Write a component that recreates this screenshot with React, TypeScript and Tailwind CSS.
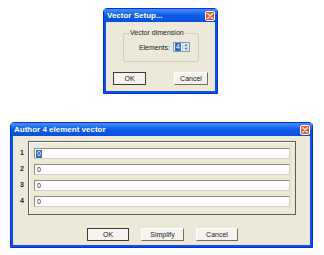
import React from "react";

function CloseBox() {
  return (
    <div className="flex h-[10px] w-[10px] items-center justify-center rounded-[2px] border border-white bg-[#e0582c]">
      <svg viewBox="0 0 8 8" className="h-[6px] w-[6px]">
        <path d="M1 1L7 7M7 1L1 7" stroke="#fff" strokeWidth="1.6" strokeLinecap="round" />
      </svg>
    </div>
  );
}

function Window({
  title,
  className,
  children,
}: {
  title: string;
  className: string;
  children: React.ReactNode;
}) {
  return (
    <div
      className={`flex flex-col rounded-t-[4px] border border-[#0831d9] bg-[#0a52e6] ${className}`}
    >
      <div className="flex h-[13px] shrink-0 items-center justify-between bg-gradient-to-b from-[#4590f7] via-[#0a5ae8] to-[#0850de] pl-[3px] pr-[2px]">
        <span className="text-[8px] font-bold leading-none text-white">{title}</span>
        <CloseBox />
      </div>
      <div className="mx-[2px] mb-[2px] flex-1 bg-[#ece9d8]">{children}</div>
    </div>
  );
}

function Button({ label, isDefault }: { label: string; isDefault?: boolean }) {
  return (
    <div
      className={`flex h-[13px] items-center justify-center border bg-[#f4f3ee] text-[7px] leading-none text-[#222] ${
        isDefault
          ? "border-[#3c3c3c]"
          : "border-t-white border-l-white border-b-[#716f64] border-r-[#716f64]"
      }`}
    >
      {label}
    </div>
  );
}

export default function App() {
  const rows = ["1", "2", "3", "4"];
  return (
    <div className="flex h-[255px] w-[324px] flex-col bg-white font-['Liberation_Sans',sans-serif]">
      {/* Vector Setup dialog */}
      <Window title="Vector Setup..." className="ml-[103px] mt-[8px] h-[86px] w-[115px]">
        <div className="flex h-full flex-col">
          <div className="relative ml-[17px] mt-[11px] h-[29px] w-[76px] rounded-[2px] border border-[#d0d0bf]">
            <span className="absolute left-[5px] top-[-5px] bg-[#ece9d8] px-[1px] text-[7px] leading-none text-[#222]">
              Vector dimension
            </span>
            <div className="mt-[8px] flex items-center justify-end gap-[3px] pr-[8px]">
              <span className="text-[7px] leading-none text-[#222]">Elements:</span>
              <div className="flex h-[10px] w-[17px] border border-[#7f9db9] bg-white">
                <span className="ml-[1px] bg-[#316ac5] px-[1px] text-[7px] leading-[8px] text-white">4</span>
                <div className="ml-auto flex w-[7px] flex-col border-l border-[#c9d4e6] bg-[#dde6f7]">
                  <span className="flex-1 text-center text-[4px] leading-[4px] text-[#4d6185]">▲</span>
                  <span className="flex-1 text-center text-[4px] leading-[4px] text-[#4d6185]">▼</span>
                </div>
              </div>
            </div>
          </div>
          <div className="mt-[10px] flex justify-between px-[7px]">
            <div className="w-[33px]">
              <Button label="OK" isDefault />
            </div>
            <div className="w-[34px]">
              <Button label="Cancel" />
            </div>
          </div>
        </div>
      </Window>

      {/* Author vector dialog */}
      <Window title="Author 4 element vector" className="ml-[10px] mt-[28px] h-[126px] w-[303px]">
        <div className="flex h-full flex-col">
          <div className="mt-[5px] flex">
            <div className="flex w-[15px] flex-col pt-[6px]">
              {rows.map((r) => (
                <div
                  key={r}
                  className="mb-[5px] h-[11px] pr-[4px] text-right text-[7px] font-bold leading-[11px] text-[#222]"
                >
                  {r}
                </div>
              ))}
            </div>
            <div className="flex h-[74px] w-[268px] flex-col gap-[5px] border border-[#5f5d55] px-[5px] pt-[6px] shadow-[inset_1px_1px_0_#fff]">
              {rows.map((r, i) => (
                <div
                  key={r}
                  className="flex h-[11px] items-center border-t border-l border-[#8f8d84] border-b border-b-[#d6d3c4] border-r border-r-[#d6d3c4] bg-[#fdfdfb] pl-[1px]"
                >
                  <span
                    className={`px-[1px] text-[7px] leading-[8px] ${
                      i === 0 ? "bg-[#316ac5] text-white" : "text-[#222]"
                    }`}
                  >
                    0
                  </span>
                </div>
              ))}
            </div>
          </div>
          <div className="mt-[13px] flex gap-[12px] pl-[74px]">
            <div className="w-[42px]">
              <Button label="OK" isDefault />
            </div>
            <div className="w-[43px]">
              <Button label="Simplify" />
            </div>
            <div className="w-[42px]">
              <Button label="Cancel" />
            </div>
          </div>
        </div>
      </Window>
    </div>
  );
}
